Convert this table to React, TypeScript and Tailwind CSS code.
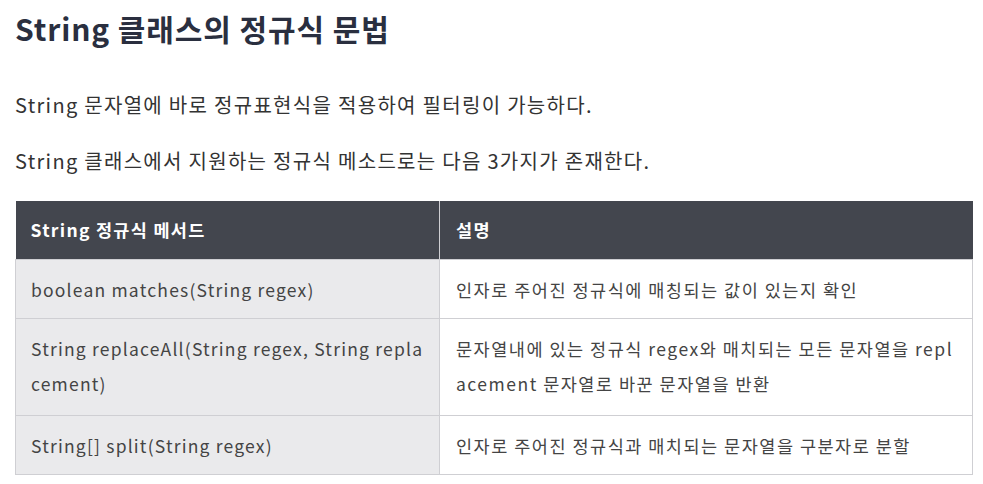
export default function App() {
  const rows = [
    {
      method: ['boolean matches(String regex)'],
      desc: ['인자로 주어진 정규식에 매칭되는 값이 있는지 확인'],
    },
    {
      method: ['String replaceAll(String regex, String repla', 'cement)'],
      desc: ['문자열내에 있는 정규식 regex와 매치되는 모든 문자열을 repl', 'acement 문자열로 바꾼 문자열을 반환'],
    },
    {
      method: ['String[] split(String regex)'],
      desc: ['인자로 주어진 정규식과 매치되는 문자열을 구분자로 분할'],
    },
  ];

  return (
    <div className="min-h-screen bg-white px-[15px] font-['Noto_Sans_CJK_KR','Noto_Sans',sans-serif]">
      <h1 className="pt-[7px] text-[30px] leading-[42px] font-bold tracking-[0.9px] text-[#2a2f3f]">
        String 클래스의 정규식 문법
      </h1>
      <p className="mt-[42px] text-[20px] leading-[28px] tracking-[1.3px] text-[#333]">
        String 문자열에 바로 정규표현식을 적용하여 필터링이 가능하다.
      </p>
      <p className="mt-[28px] text-[20px] leading-[28px] tracking-[1.3px] text-[#333]">
        String 클래스에서 지원하는 정규식 메소드로는 다음 3가지가 존재한다.
      </p>
      <table className="mt-[26px] w-[958px] table-fixed border-collapse text-[17.5px] tracking-[1.3px] text-[#444]">
        <colgroup>
          <col className="w-[424px]" />
          <col />
        </colgroup>
        <thead>
          <tr className="bg-[#43464e] text-white">
            <th className="border-r border-[#cfcfd3] px-[15px] py-[12px] text-left font-bold leading-[34px]">
              String 정규식 메서드
            </th>
            <th className="px-[16px] py-[12px] text-left font-bold leading-[34px]">설명</th>
          </tr>
        </thead>
        <tbody>
          {rows.map((r, i) => (
            <tr key={i}>
              <td className="border border-[#cfcfd3] bg-[#eaeaec] px-[15px] pt-[12px] pb-[11px] leading-[35px] whitespace-nowrap tracking-[1.2px]">
                {r.method.map((l, j) => (
                  <div key={j} className={j > 0 ? 'pb-[3px]' : ''}>{l}</div>
                ))}
              </td>
              <td className="border border-[#cfcfd3] bg-white px-[16px] pt-[12px] pb-[11px] leading-[35px] whitespace-nowrap tracking-[1.5px]">
                {r.desc.map((l, j) => (
                  <div key={j} className={j > 0 ? 'pb-[3px]' : ''}>{l}</div>
                ))}
              </td>
            </tr>
          ))}
        </tbody>
      </table>
    </div>
  );
}
